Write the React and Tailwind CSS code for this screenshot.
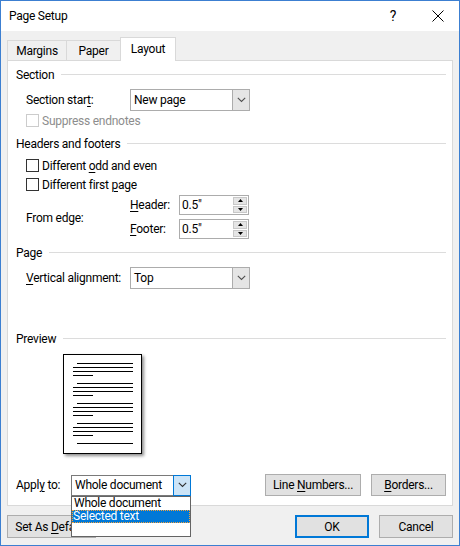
import React from "react";

function Chevron({ color = "#505050" }) {
  return (
    <svg width="9" height="6" viewBox="0 0 9 6">
      <path d="M0.8 0.8 L4.5 4.5 L8.2 0.8" fill="none" stroke={color} strokeWidth="1.1" />
    </svg>
  );
}

function GroupHeader({ children }) {
  return (
    <div className="flex items-center h-[16px] pr-[6px]">
      <span className="leading-none whitespace-nowrap">{children}</span>
      <div className="flex-1 h-px bg-[#dcdcdc] ml-[7px] -mt-[1px]" />
    </div>
  );
}

function Select({ value }) {
  return (
    <div className="flex h-[22px] w-[120px] border border-[#acacac] bg-white">
      <div className="flex-1 flex items-center pl-[3px]">{value}</div>
      <div className="w-[17px] bg-[#e5e5e5] border-l border-[#acacac] flex items-center justify-center">
        <Chevron />
      </div>
    </div>
  );
}

function Check({ children, disabled }) {
  return (
    <div className="flex items-center h-[19px] pl-[10px]">
      <div
        className={
          disabled
            ? "w-[13px] h-[13px] border border-[#cccccc] bg-white"
            : "w-[13px] h-[13px] border border-[#333333] bg-white"
        }
      />
      <span className={disabled ? "ml-[3px] text-[#8d8d8d] whitespace-nowrap" : "ml-[3px] whitespace-nowrap"}>
        {children}
      </span>
    </div>
  );
}

function Spin({ value }) {
  return (
    <div className="flex h-[20px] w-[70px] border border-[#acacac] bg-white">
      <div className="flex-1 flex items-center pl-[2px]">{value}</div>
      <div className="w-[15px] flex flex-col py-px pr-px gap-px">
        <div className="flex-1 bg-[#e5e5e5] border border-[#c8c8c8] flex items-center justify-center">
          <svg width="5" height="3" viewBox="0 0 5 3">
            <path d="M0 3 L2.5 0 L5 3 Z" fill="#000" />
          </svg>
        </div>
        <div className="flex-1 bg-[#e5e5e5] border border-[#c8c8c8] flex items-center justify-center">
          <svg width="5" height="3" viewBox="0 0 5 3">
            <path d="M0 0 L2.5 3 L5 0 Z" fill="#000" />
          </svg>
        </div>
      </div>
    </div>
  );
}

function Btn({ children, w, primary, h = "h-[22px]" }) {
  return (
    <div
      className={
        (primary ? "border-2 border-[#0078d7] " : "border border-[#adadad] ") +
        "bg-[#e1e1e1] flex items-center justify-center " +
        h +
        " " +
        w
      }
    >
      <span className="whitespace-nowrap">{children}</span>
    </div>
  );
}

function U({ children }) {
  return <span className="underline underline-offset-[2px] decoration-1">{children}</span>;
}

function PreviewPage() {
  const para = (last) => (
    <div className="flex flex-col gap-[3px]">
      <div className="h-px w-[56px] ml-[13px] bg-black" />
      {!last && (
        <>
          <div className="h-px w-[60px] ml-[9px] bg-black" />
          <div className="h-px w-[60px] ml-[9px] bg-black" />
          <div className="h-px w-[20px] ml-[9px] bg-black" />
        </>
      )}
    </div>
  );
  return (
    <div className="w-[79px] h-[100px] border border-black bg-white shadow-[2px_2px_3px_rgba(0,0,0,0.45)] pt-[8px] flex flex-col gap-[7px]">
      {para(false)}
      {para(false)}
      {para(false)}
      {para(false)}
      {para(true)}
    </div>
  );
}

export default function App() {
  return (
    <div className="w-[460px] h-[546px] border border-[#3c7fd1] bg-[#f0f0f0] flex flex-col font-['Roboto',sans-serif] text-[12px] tracking-[-0.25px] text-black overflow-hidden leading-none">
      {/* Title bar */}
      <div className="h-[30px] bg-white flex items-center shrink-0">
        <span className="pl-[8px] text-[12px]">Page Setup</span>
        <span className="ml-auto text-[14px] mr-[36px] mb-[1px]">?</span>
        <svg width="12" height="12" viewBox="0 0 12 12" className="mr-[15px]">
          <path d="M0.5 0.5 L11.5 11.5 M11.5 0.5 L0.5 11.5" stroke="#000" strokeWidth="1" />
        </svg>
      </div>

      {/* Body */}
      <div className="flex-1 flex flex-col px-[6px]">
        {/* Tabs */}
        <div className="flex items-end h-[29px] shrink-0">
          <div className="w-[60px] h-[20px] border-l border-t border-r border-[#d9d9d9] flex items-center justify-center">
            Margins
          </div>
          <div className="w-[53px] h-[20px] border-t border-[#d9d9d9] flex items-center justify-center">
            Paper
          </div>
          <div className="relative z-10 w-[56px] h-[24px] -mb-px border-l border-t border-r border-[#d9d9d9] bg-white flex items-center justify-center pb-[1px]">
            Layout
          </div>
        </div>

        {/* Panel */}
        <div className="h-[446px] border border-[#d9d9d9] bg-white flex flex-col pl-[8px] shrink-0">
          <div className="mt-[6px]">
            <GroupHeader>Section</GroupHeader>
          </div>
          <div className="mt-[6px] flex items-center pl-[10px]">
            <span className="w-[104px] whitespace-nowrap">
              Section star<U>t</U>:
            </span>
            <Select value="New page" />
          </div>
          <Check disabled>Suppress endnotes</Check>

          <div className="mt-[6px]">
            <GroupHeader>Headers and footers</GroupHeader>
          </div>
          <div className="mt-[4px]">
            <Check>
              Different <U>o</U>dd and even
            </Check>
            <Check>
              Different first <U>p</U>age
            </Check>
          </div>
          <div className="mt-[1px] flex items-center pl-[10px]">
            <span className="w-[104px] mt-[2px] whitespace-nowrap">From edge:</span>
            <div className="flex flex-col gap-[4px]">
              <div className="flex items-center">
                <span className="w-[49px] whitespace-nowrap">
                  <U>H</U>eader:
                </span>
                <Spin value={'0.5"'} />
              </div>
              <div className="flex items-center">
                <span className="w-[49px] whitespace-nowrap">
                  <U>F</U>ooter:
                </span>
                <Spin value={'0.5"'} />
              </div>
            </div>
          </div>

          <div className="mt-[6px]">
            <GroupHeader>Page</GroupHeader>
          </div>
          <div className="mt-[6px] flex items-center pl-[10px]">
            <span className="w-[104px] whitespace-nowrap">
              <U>V</U>ertical alignment:
            </span>
            <Select value="Top" />
          </div>

          <div className="mt-[42px]">
            <GroupHeader>Preview</GroupHeader>
          </div>
          <div className="mt-[7px] ml-[47px]">
            <PreviewPage />
          </div>

          <div className="mt-[20px] flex items-center pr-[6px]">
            <span className="w-[55px] whitespace-nowrap">
              Appl<U>y</U> to:
            </span>
            <div className="relative z-20">
              <div className="flex h-[21px] w-[120px] border border-[#7a7a7a] bg-white">
                <div className="flex-1 flex items-center pl-[3px] whitespace-nowrap">Whole document</div>
                <div className="w-[18px] -my-px -mr-px bg-[#cce4f7] border border-[#0078d7] flex items-center justify-center">
                  <Chevron color="#303030" />
                </div>
              </div>
              <div className="absolute left-0 top-full w-[120px] h-[41px] border border-[#646464] bg-white flex flex-col">
                <div className="h-[13px] flex items-center pl-[2px] whitespace-nowrap">Whole document</div>
                <div className="h-[13px] flex items-center pl-[1px] bg-[#0078d7] text-white outline-1 outline-dotted outline-[#f5a23c] -outline-offset-1 whitespace-nowrap">
                  Selected text
                </div>
                <div className="h-[13px]" />
              </div>
            </div>
            <div className="ml-auto flex gap-[10px]">
              <Btn w="w-[96px]">
                Line <U>N</U>umbers...
              </Btn>
              <Btn w="w-[75px]">
                <U>B</U>orders...
              </Btn>
            </div>
          </div>
        </div>

        {/* Bottom buttons */}
        <div className="mt-[9px] flex items-center">
          <Btn w="w-[89px]" h="h-[23px]">
            Set As <U>D</U>efault
          </Btn>
          <div className="ml-auto flex gap-[10px]">
            <Btn w="w-[74px]" h="h-[23px]" primary>
              OK
            </Btn>
            <Btn w="w-[74px]" h="h-[23px]">
              Cancel
            </Btn>
          </div>
        </div>
      </div>
    </div>
  );
}
